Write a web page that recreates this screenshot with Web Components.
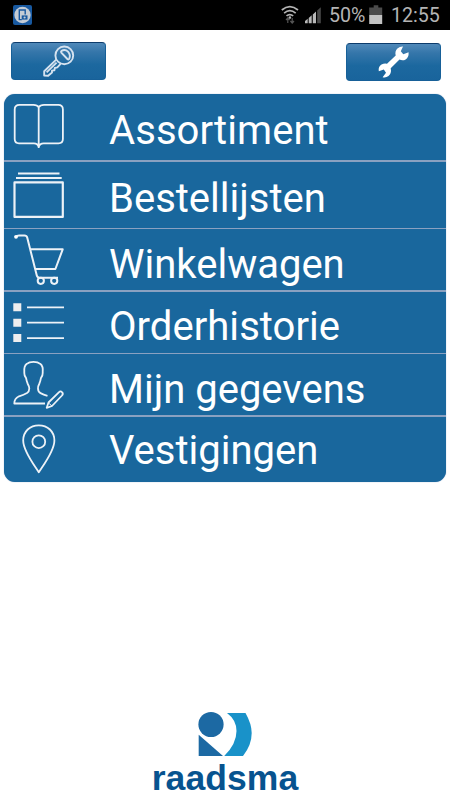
<!DOCTYPE html>
<html lang="nl">
<head>
<meta charset="utf-8">
<title>Raadsma</title>
<style>
  body {
    margin: 0;
    width: 450px;
    height: 800px;
    overflow: hidden;
    background: white;
    font-family: Roboto, sans-serif;
  }
</style>
</head>
<body>
<app-screen>
  <status-bar slot="status" battery="50%" time="12:55"></status-bar>
  <tool-button slot="tools" icon="key"></tool-button>
  <tool-button slot="tools" icon="wrench" style="margin-top: 1px"></tool-button>
  <menu-row icon="book" style="--h: 66px; --line: 2px; --top: 13px; --track: .07px">Assortiment</menu-row>
  <menu-row icon="stack" style="--h: 66px; --line: 1px; --top: 12.5px">Bestellijsten</menu-row>
  <menu-row icon="cart" style="--h: 61px; --line: 2px; --top: 12px">Winkelwagen</menu-row>
  <menu-row icon="list" style="--h: 61px; --line: 1px; --top: 11px; --track: .05px">Orderhistorie</menu-row>
  <menu-row icon="person" style="--h: 61px; --line: 2px; --top: 12px">Mijn gegevens</menu-row>
  <menu-row icon="pin" style="--h: 65px; --line: 0px; --top: 10px">Vestigingen</menu-row>
  <brand-logo slot="brand">raadsma</brand-logo>
</app-screen>

<script>
// menu icons are drawn 100 wide, from the left edge of the row
const menuIcons = {
  book: `<g stroke-width="1.8"><path d="M34.7 12.8V54M34.7 13.2Q33.2 10.9 29.5 10.9H15.5Q10.7 10.9 10.7 15.5V45Q10.7 49.3 15 49.3H30Q33.6 49.3 34.7 53Q35.8 49.3 39.5 49.3H54.5Q58.9 49.3 58.9 45V15.5Q58.9 10.9 54.2 10.9H40Q36.2 10.9 34.7 13.2"/></g>`,
  stack: `<path d="M14 11.5H55.5M12 16H57.7" stroke-width="2.2"/><path d="M10.5 20.4H58.8V54.9H10.5Z" stroke-width="2.2"/>`,
  cart: `<g stroke-width="2"><path d="M12 8.2Q13 6.4 15 6.4H20.5Q22.6 6.4 23.2 8.5L32.8 46.5Q33.4 48.7 35.5 48.7H54M26.3 20.3H58.7L51.4 40H31.6"/><circle cx="12" cy="7.8" r="1.9" fill="#fff" stroke="none"/><circle cx="36.8" cy="51.8" r="3.1"/><circle cx="50.2" cy="51.8" r="3.1"/></g>`,
  list: `<g fill="#eeeeef" stroke="none"><path d="M9.3 11.2h8v8h-8zM9.3 26.8h8v8h-8zM9.3 42h8v8h-8z"/></g><path d="M23 15.3H60M23 30.7H60M23 46.1H60" stroke-width="1.8"/>`,
  person: `<g stroke-width="1.8"><path d="M41 49.5H10.3Q10.3 44.5 15 42.3Q20 40.8 23 39Q25.3 37.5 25.3 34.5Q25.3 32.6 23.8 30Q22.6 27.5 22.1 24.2Q20.2 22 20.3 19V18Q19.8 12 22.8 9.8Q25 7.8 29.5 7.8Q34 7.8 36.2 9.8Q39.4 12.2 38.7 18V19Q38.8 22 36.9 24.2Q36.4 27.5 35.2 30Q33.9 32.3 34 34.5Q34 37.8 36.5 39.1Q39.5 40.7 43.5 41.8"/><path d="M42.7 53.8L44.5 48.5L54.8 38.3Q56.5 36.6 58 38.1Q59.6 39.6 58 41.5L48 52Z"/><path d="M44.5 49L48 52" stroke-width="1"/></g>`,
  pin: `<g stroke-width="1.8"><path d="M34.8 55.3C31 49 19.2 34.5 19.2 23.5C19.2 14.5 26 8.3 34.8 8.3S50.4 14.5 50.4 23.5C50.4 34.5 38.6 49 34.8 55.3Z"/><circle cx="34.8" cy="24.7" r="6.4"/></g>`
};

const toolIcons = {
  // bow, inner half circle, shaft with teeth
  key: `<g fill="none" stroke="#d5e2ef" stroke-width="1.9" stroke-linejoin="round"><circle cx="53.3" cy="13.4" r="8.9"/><path d="M50.6 8.8Q54 7 57 9.6Q60 12.8 58.2 16.8Q57.4 18 56.4 17L50.3 10.6Q49.6 9.6 50.6 8.8Z"/><path d="M45.2 17.6L33.2 29.2V33.6L37.2 33.8L41 30.6V28.6L43.4 28.3L43.8 26L46.3 25.4L49.6 21.8M45.6 20.6L35.6 30.4"/></g>`,
  wrench: `<path fill="#fff" d="M57 3.5L54.8 8.2L57.3 11.2L62.6 9.2Q63 14.2 59.6 16.4Q56.8 18 53.5 16.6L44.7 25.3Q45.8 30.2 42.5 33Q39.9 35 36.6 34.2L40 29.7L37.8 26.6L32.8 28.3Q32 23.6 35.5 21.5Q38.5 19.8 41 20.7L49.7 12.5Q48.5 8 51.7 5.2Q54 3.3 57 3.5Z"/>`
};

class AppScreen extends HTMLElement {
  constructor() {
    super();
    this.attachShadow({ mode: 'open' });
    this.shadowRoot.innerHTML = `
      <style>
        :host {
          display: flex;
          flex-direction: column;
          height: 800px;
        }
        .tools {
          display: flex;
          justify-content: space-between;
          align-items: flex-start;
          box-sizing: border-box;
          height: 64px;
          padding: 12px 9px 0 11px;
        }
        .menu {
          margin: 0 4px;
          border-radius: 11px;
          overflow: hidden;
          background: #19679d;
          box-shadow: 0 0 1px #6d91bc;
        }
        .brand {
          margin-top: auto;
        }
      </style>
      <slot name="status"></slot>
      <div class="tools"><slot name="tools"></slot></div>
      <div class="menu"><slot></slot></div>
      <div class="brand"><slot name="brand"></slot></div>
    `;
  }
}

class StatusBar extends HTMLElement {
  constructor() {
    super();
    this.attachShadow({ mode: 'open' });
    this.shadowRoot.innerHTML = `
      <style>
        :host {
          display: flex;
          align-items: center;
          box-sizing: border-box;
          height: 30px;
          padding: 0 9px 0 13px;
          background: black;
          color: #b4b4b4;
          font-size: 19.6px;
          line-height: 30px;
        }
        svg { display: block; flex: none; }
        .app { margin-right: auto; }
        .battery { width: 38px; }
        .time { width: 50px; white-space: nowrap; }
        span { padding-top: 2px; }
      </style>
      <svg class="app" width="19" height="30" viewBox="13 0 19 30">
        <rect x="13" y="5" width="19" height="20" rx="2" fill="#1859a0"/>
        <circle cx="22.5" cy="15" r="8.2" fill="#c4ccd5"/>
        <path d="M21.8 19.6H19.3V10H25.2V14.5" fill="none" stroke="#1859a0" stroke-width="1.4"/>
        <rect x="21.7" y="15.4" width="5.8" height="4.2" fill="#1859a0"/>
        <circle cx="24.6" cy="17.5" r="1.1" fill="#c4ccd5"/>
      </svg>
      <svg width="50" height="30" viewBox="279 0 50 30">
        <g fill="none" stroke="#b4b4b4" stroke-width="1.7">
          <path d="M281.8 10Q289.8 3.2 298 10M284.1 13.1Q289.8 8.3 295.7 13.1M286.5 15.9Q289.8 13.2 293.2 15.9"/>
        </g>
        <circle cx="289.9" cy="17.6" r="1.3" fill="#b4b4b4"/>
        <path d="M287.8 23V18.5M286 20L287.8 18L289.6 20M292.2 18V22.5M290.4 21L292.2 23L294 21" fill="none" stroke="#555" stroke-width="1.2"/>
        <path d="M305 23.3V21L307.7 18.8V23.3ZM308.7 23.3V18L311.7 15.3V23.3ZM312.8 23.3V14.4L316 11.5V23.3Z" fill="#b8b8b8"/>
        <path d="M317.2 23.3V10.5L320.8 7.2V23.3Z" fill="#484848"/>
      </svg>
      <span class="battery"></span>
      <svg width="24" height="30" viewBox="367 0 24 30">
        <path d="M369.2 15V7.6H373.7V5.3H378.3V7.6H382.2V15Z" fill="#4b4b4b"/>
        <path d="M369.2 15H382.2V24H369.2Z" fill="#c2c2c2"/>
      </svg>
      <span class="time"></span>
    `;
  }

  connectedCallback() {
    this.shadowRoot.querySelector('.battery').textContent = this.getAttribute('battery');
    this.shadowRoot.querySelector('.time').textContent = this.getAttribute('time');
  }
}

class ToolButton extends HTMLElement {
  constructor() {
    super();
    this.attachShadow({ mode: 'open' });
  }

  connectedCallback() {
    this.shadowRoot.innerHTML = `
      <style>
        :host {
          display: block;
          box-sizing: border-box;
          width: 95px;
          height: 38px;
          border: 1px solid #176098;
          border-top-color: #0d3c6c;
          border-radius: 4px;
          background: linear-gradient(#5089b9, #3576aa 25%, #1c689f 60%, #19649c);
        }
        svg { display: block; margin: -1px; }
      </style>
      <svg width="95" height="38" viewBox="0 0 95 38">${toolIcons[this.getAttribute('icon')]}</svg>
    `;
  }
}

class MenuRow extends HTMLElement {
  constructor() {
    super();
    this.attachShadow({ mode: 'open' });
  }

  connectedCallback() {
    this.shadowRoot.innerHTML = `
      <style>
        :host {
          display: flex;
          height: var(--h);
          border-bottom: var(--line) solid #8aa1c1;
          color: white;
          font-size: 40px;
          line-height: 48px;
          white-space: nowrap;
        }
        svg { flex: none; }
        .label {
          padding: var(--top) 0 0 5px;
          letter-spacing: var(--track, 0);
        }
      </style>
      <svg width="100" height="60" fill="none" stroke="#edf2f7" stroke-linejoin="round">${menuIcons[this.getAttribute('icon')]}</svg>
      <div class="label"><slot></slot></div>
    `;
  }
}

class BrandLogo extends HTMLElement {
  constructor() {
    super();
    this.attachShadow({ mode: 'open' });
    this.shadowRoot.innerHTML = `
      <style>
        :host {
          display: flex;
          flex-direction: column;
          align-items: center;
          height: 90px;
          color: #07538f;
          font: bold 35.5px/42px "Liberation Sans", sans-serif;
          letter-spacing: .1px;
        }
        svg { display: block; flex: none; }
      </style>
      <svg width="56" height="47" viewBox="197 710 56 47">
        <circle cx="211" cy="724.5" r="12.6" fill="#1c69a3"/>
        <path d="M198.7 734.8L223 756H198.7Z" fill="#1c69a3"/>
        <path d="M227 713H245.5Q251.7 724 251.7 733Q251.7 745 243 756H224.2Q236.5 744 236.5 731Q236.5 720 227 713Z" fill="#1992c9"/>
      </svg>
      <div><slot></slot></div>
    `;
  }
}

window.customElements.define('app-screen', AppScreen);
window.customElements.define('status-bar', StatusBar);
window.customElements.define('tool-button', ToolButton);
window.customElements.define('menu-row', MenuRow);
window.customElements.define('brand-logo', BrandLogo);
</script>
</body>
</html>
